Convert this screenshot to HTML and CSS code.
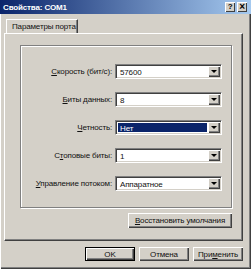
FILE: index.html
```html
<!DOCTYPE html>
<html lang="ru">
<head>
    <meta charset="UTF-8">
    <title>Свойства: COM1</title>
    <link rel="stylesheet" href="styles.css">
</head>
<body>
    <div class="window">
        <div class="titlebar">
            <span class="title">Свойства: COM1</span>
            <div class="title-buttons">
                <span class="tbtn">?</span>
                <span class="tbtn close">×</span>
            </div>
        </div>

        <div class="client">
            <div class="tabs">
                <div class="tab">Параметры порта</div>
            </div>

            <div class="panel">
                <div class="group">
                    <div class="row">
                        <label class="label"><u>С</u>корость (бит/с):</label>
                        <div class="combo"><span class="value">57600</span><span class="drop"></span></div>
                    </div>
                    <div class="row">
                        <label class="label"><u>Б</u>иты данных:</label>
                        <div class="combo"><span class="value">8</span><span class="drop"></span></div>
                    </div>
                    <div class="row">
                        <label class="label"><u>Ч</u>етность:</label>
                        <div class="combo focused"><span class="value">Нет</span><span class="drop"></span></div>
                    </div>
                    <div class="row">
                        <label class="label">С<u>т</u>оповые биты:</label>
                        <div class="combo"><span class="value">1</span><span class="drop"></span></div>
                    </div>
                    <div class="row">
                        <label class="label"><u>У</u>правление потоком:</label>
                        <div class="combo"><span class="value">Аппаратное</span><span class="drop"></span></div>
                    </div>
                </div>

                <div class="restore-row">
                    <button class="btn restore"><u>В</u>осстановить умолчания</button>
                </div>
            </div>

            <div class="actions">
                <button class="btn default">OK</button>
                <button class="btn">Отмена</button>
                <button class="btn">При<u>м</u>енить</button>
            </div>
        </div>
    </div>
</body>
</html>
```

FILE: styles.css
```css
:root {
    --face: #d4d0c8;
    --shadow: #808080;
    --dark: #404040;
    --light: #ffffff;
    --navy: #0a246a;
}

* {
    margin: 0;
    padding: 0;
    box-sizing: border-box;
}

body {
    background: var(--face);
    font-family: "Liberation Sans", Arial, sans-serif;
    font-size: 8px;
    letter-spacing: -0.15px;
    color: #111;
}

.window {
    width: 251px;
    height: 269px;
    background: var(--face);
    box-shadow: inset 1px 0 var(--light), inset -1px -1px var(--dark), inset -2px -2px var(--shadow);
    display: flex;
    flex-direction: column;
}

.titlebar {
    height: 14px;
    background: linear-gradient(to right, var(--navy), #a6caf0);
    display: flex;
    align-items: center;
    justify-content: space-between;
    padding: 0 4px 0 3px;
}

.title {
    color: #fff;
    font-weight: bold;
    font-size: 8px;
}

.title-buttons {
    display: flex;
    gap: 2px;
}

.tbtn {
    width: 10px;
    height: 10px;
    background: var(--face);
    box-shadow: inset 1px 1px var(--light), inset -1px -1px var(--dark);
    font-size: 8px;
    font-weight: bold;
    line-height: 10px;
    text-align: center;
    color: #000;
}

.tbtn.close {
    font-size: 10px;
    line-height: 9px;
}

.client {
    padding: 5px 0 0 4px;
    display: flex;
    flex-direction: column;
}

.tabs {
    display: flex;
    padding-left: 2px;
}

.tab {
    width: 72px;
    height: 14px;
    border-top: 1px solid var(--light);
    border-left: 1px solid var(--light);
    border-right: 1px solid var(--dark);
    box-shadow: inset -1px 0 var(--shadow);
    padding: 2px 0 0 5px;
    white-space: nowrap;
}

.panel {
    width: 239px;
    height: 208px;
    border-top: 1px solid var(--light);
    border-left: 1px solid var(--light);
    border-right: 1px solid var(--dark);
    border-bottom: 1px solid var(--dark);
    box-shadow: inset -1px -1px var(--shadow);
}

.group {
    margin: 11px 0 0 15px;
    width: 212px;
    height: 163px;
    border: 1px solid var(--shadow);
    box-shadow: 1px 1px var(--light), inset 1px 1px var(--light);
    padding-top: 18px;
    display: flex;
    flex-direction: column;
    gap: 13px;
}

.row {
    display: flex;
    align-items: center;
    gap: 3px;
}

.label {
    width: 91px;
    text-align: right;
    white-space: nowrap;
}

.combo {
    width: 107px;
    height: 15px;
    background: #fff;
    border-top: 1px solid var(--shadow);
    border-left: 1px solid var(--shadow);
    border-right: 1px solid var(--light);
    border-bottom: 1px solid var(--light);
    box-shadow: inset 1px 1px var(--dark), inset -1px -1px var(--face);
    display: flex;
    padding: 1px;
}

.value {
    flex: 1;
    padding: 1px 2px 0;
    line-height: 10px;
    margin: 1px;
}

.combo.focused .value {
    background: var(--navy);
    color: #fff;
}

.drop {
    width: 12px;
    background: var(--face);
    box-shadow: inset 1px 1px var(--light), inset -1px -1px var(--dark), inset -2px -2px var(--shadow);
    position: relative;
}

.drop::after {
    content: "";
    position: absolute;
    left: 3px;
    top: 4px;
    border-left: 3px solid transparent;
    border-right: 3px solid transparent;
    border-top: 3px solid #000;
}

.restore-row {
    margin: 5px 0 0 15px;
    width: 212px;
    display: flex;
    justify-content: flex-end;
}

.btn {
    height: 15px;
    background: var(--face);
    border: none;
    box-shadow: inset 1px 1px var(--light), inset -1px -1px var(--dark), inset -2px -2px var(--shadow);
    font-family: inherit;
    font-size: 8px;
    letter-spacing: inherit;
    color: #111;
    text-align: center;
}

.restore {
    width: 104px;
}

.actions {
    width: 239px;
    margin-top: 6px;
    display: flex;
    justify-content: flex-end;
    gap: 4px;
}

.actions .btn {
    width: 50px;
    height: 14px;
}

.btn.default {
    box-shadow: inset 0 0 0 1px #000, inset 2px 2px var(--light), inset -2px -2px var(--dark), inset -3px -3px var(--shadow);
}
```
